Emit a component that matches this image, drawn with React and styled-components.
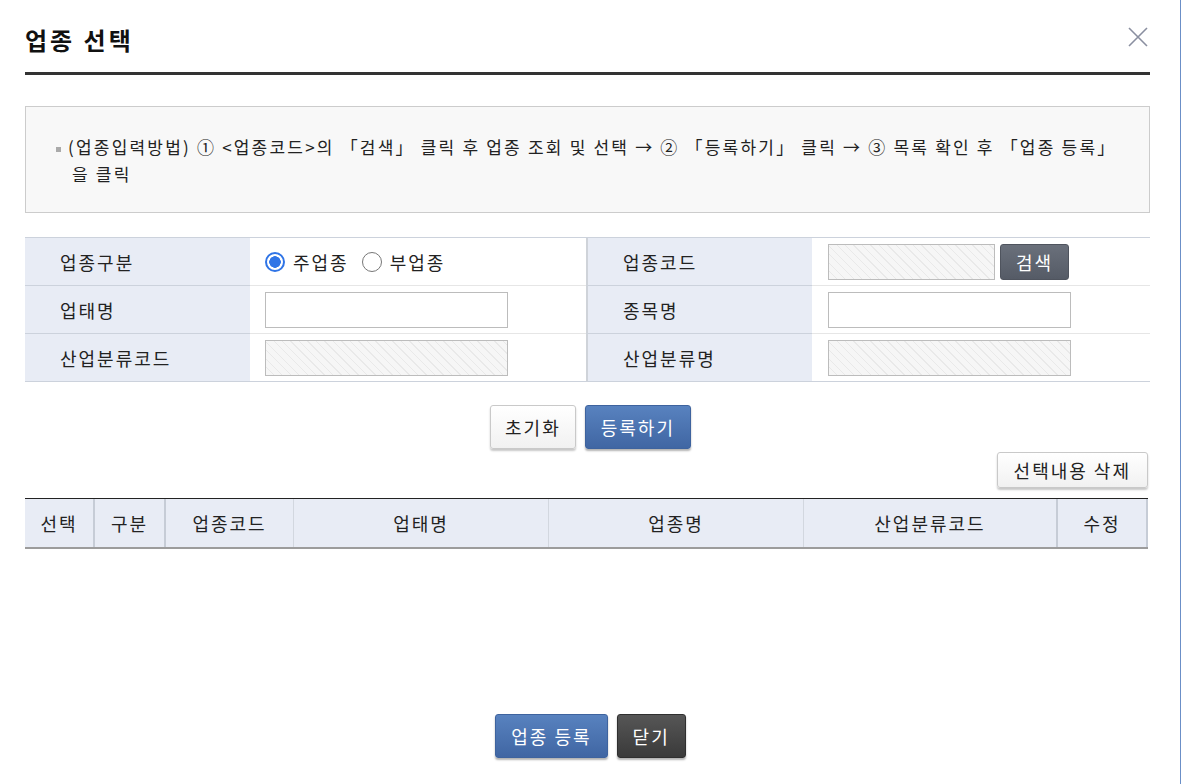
import React from 'react';
import styled, { createGlobalStyle, css } from 'styled-components';

const GlobalStyle = createGlobalStyle`
  html, body { margin: 0; padding: 0; background: #fff; }
  body { font-family: "Noto Sans CJK KR", "Noto Sans", sans-serif; color: #222; }
  * { box-sizing: border-box; }
`;

const Popup = styled.div`
  width: 1181px;
  height: 784px;
  padding: 0 30px 0 25px;
  border-right: 1px solid #6b8fc7;
  background: #fff;
  overflow: hidden;
`;

const Header = styled.div`
  display: flex;
  align-items: center;
  justify-content: space-between;
  height: 75px;
  padding: 8px 2px 0 0;
  border-bottom: 3px solid #333;
`;

const Title = styled.h1`
  margin: 0;
  font-size: 24px;
  font-weight: 700;
  line-height: 1;
  letter-spacing: 3px;
  color: #111;
`;

const CloseButton = styled.button`
  width: 20px;
  height: 20px;
  padding: 0;
  margin-top: -6px;
  border: 0;
  background: none;
  cursor: pointer;
`;

const InfoBox = styled.div`
  margin-top: 31px;
  padding: 26px 30px 25px 46px;
  border: 1px solid #ccc;
  background: #f8f8f8;
  font-size: 17px;
  line-height: 27px;
  letter-spacing: 2.2px;
  color: #222;
  text-indent: -16px;
`;

const Bullet = styled.span`
  display: inline-block;
  width: 5px;
  height: 5px;
  margin-right: 7px;
  background: #aaa;
  vertical-align: middle;
  text-indent: 0;
`;

const FormGrid = styled.div`
  display: grid;
  grid-template-columns: 225px 336px 226px 1fr;
  margin-top: 24px;
  border-top: 1px solid #ccd2dc;
`;

const LabelCell = styled.div`
  display: flex;
  align-items: center;
  height: 48px;
  padding-left: 35px;
  background: #e8ecf5;
  border-bottom: 1px solid #ccd2dc;
  font-size: 18px;
  letter-spacing: 2px;
  color: #222;
  ${(p) => p.$divider && css`
    border-left: 2px solid #cfd3d9;
  `}
`;

const ValueCell = styled.div`
  display: flex;
  align-items: center;
  gap: 5px;
  height: 48px;
  padding-left: ${(p) => p.$pl || 15}px;
  border-bottom: 1px solid ${(p) => (p.$last ? '#ccd2dc' : '#e6e6e6')};
  font-size: 18px;
`;

const TextInput = styled.input`
  width: ${(p) => p.$w || 243}px;
  height: 36px;
  margin: 0;
  padding: 0 8px;
  border: 1px solid #bcbcbc;
  background: #fff;
  font: inherit;
  ${(p) => p.disabled && css`
    background: repeating-linear-gradient(45deg, #f6f6f6 0, #f6f6f6 5px, #e9e9e9 5px, #e9e9e9 6px);
  `}
`;

const RadioLabel = styled.label`
  display: inline-flex;
  align-items: center;
  gap: 8px;
  margin-right: 8px;
  font-size: 18px;
  letter-spacing: 2px;
  color: #222;
  cursor: pointer;
`;

const RadioMark = styled.span`
  display: inline-block;
  width: 20px;
  height: 20px;
  border-radius: 50%;
  border: ${(p) => (p.$on ? '2px solid #2f74e6' : '1.5px solid #777')};
  background: ${(p) => (p.$on ? 'radial-gradient(circle, #2f74e6 0 5.5px, #fff 6px)' : '#fff')};
`;

const ButtonRow = styled.div`
  display: flex;
  justify-content: center;
  gap: 9px;
  padding-left: 6px;
  margin-top: ${(p) => p.$top || 0}px;
`;

const RightRow = styled.div`
  display: flex;
  justify-content: flex-end;
  padding-right: 2px;
  margin-top: 3px;
`;

const variants = {
  light: css`
    background: linear-gradient(#fff, #f1f1f1);
    border: 1px solid #c9c9c9;
    color: #222;
    box-shadow: 0 2px 2px rgba(0, 0, 0, 0.22);
  `,
  primary: css`
    background: linear-gradient(#5882bf, #4066a3);
    border: 1px solid #3e639e;
    color: #fff;
    box-shadow: 0 2px 2px rgba(0, 0, 0, 0.3);
  `,
  dark: css`
    background: linear-gradient(#565656, #3a3a3a);
    border: 1px solid #2f2f2f;
    color: #fff;
    box-shadow: 0 2px 2px rgba(0, 0, 0, 0.3);
  `,
  gray: css`
    background: linear-gradient(#6a707b, #555b66);
    border: 1px solid #4f545e;
    color: #fff;
  `,
};

const Button = styled.button`
  height: ${(p) => p.$h || 44}px;
  padding: 0 ${(p) => p.$px || 15}px;
  border-radius: 3px;
  font-family: inherit;
  font-size: 18px;
  letter-spacing: 2px;
  line-height: 1;
  cursor: pointer;
  ${(p) => variants[p.$variant || 'light']}
`;

const ListTable = styled.div`
  display: grid;
  grid-template-columns: 70px 71px 128px 255px 255px 254px 90px;
  width: 1123px;
  margin-top: 10px;
  border-top: 1px solid #222;
  border-bottom: 2px solid #9c9c9c;
  background: #e8ecf5;
`;

const HeadCell = styled.div`
  display: flex;
  align-items: center;
  justify-content: center;
  height: 48px;
  font-size: 18px;
  letter-spacing: 2px;
  color: #222;
  border-right: ${(p) => (p.$thick ? '2px solid #c6ccd6' : '1px solid #d2d7df')};
`;

const ListBody = styled.div`
  height: 165px;
`;

const columns = [
  { name: '선택', thick: true },
  { name: '구분', thick: true },
  { name: '업종코드' },
  { name: '업태명' },
  { name: '업종명' },
  { name: '산업분류코드', thick: true },
  { name: '수정', thick: true },
];

export default function App() {
  const [kind, setKind] = React.useState('main');

  return (
    <>
      <GlobalStyle />
      <Popup>
        <Header>
          <Title>업종 선택</Title>
          <CloseButton aria-label="닫기">
            <svg width="20" height="20" viewBox="0 0 20 20">
              <path d="M1 1L19 19M19 1L1 19" stroke="#8a8fa0" strokeWidth="1.6" fill="none" />
            </svg>
          </CloseButton>
        </Header>

        <InfoBox>
          <Bullet />
          (업종입력방법) ① &lt;업종코드&gt;의 「검색」 클릭 후 업종 조회 및 선택 → ② 「등록하기」 클릭 → ③ 목록 확인 후 「업종 등록」 을 클릭
        </InfoBox>

        <FormGrid>
          <LabelCell>업종구분</LabelCell>
          <ValueCell>
            <RadioLabel onClick={() => setKind('main')}>
              <RadioMark $on={kind === 'main'} />
              주업종
            </RadioLabel>
            <RadioLabel onClick={() => setKind('sub')}>
              <RadioMark $on={kind === 'sub'} />
              부업종
            </RadioLabel>
          </ValueCell>
          <LabelCell $divider>업종코드</LabelCell>
          <ValueCell $pl={16}>
            <TextInput $w={167} disabled />
            <Button $variant="gray" $h={36} $px={15}>검색</Button>
          </ValueCell>

          <LabelCell>업태명</LabelCell>
          <ValueCell><TextInput /></ValueCell>
          <LabelCell $divider>종목명</LabelCell>
          <ValueCell $pl={16}><TextInput /></ValueCell>

          <LabelCell>산업분류코드</LabelCell>
          <ValueCell $last><TextInput disabled /></ValueCell>
          <LabelCell $divider>산업분류명</LabelCell>
          <ValueCell $last $pl={16}><TextInput disabled /></ValueCell>
        </FormGrid>

        <ButtonRow $top={23}>
          <Button $variant="light" $px={14}>초기화</Button>
          <Button $variant="primary" $px={15}>등록하기</Button>
        </ButtonRow>

        <RightRow>
          <Button $variant="light" $h={36} $px={16}>선택내용 삭제</Button>
        </RightRow>

        <ListTable>
          {columns.map((c) => (
            <HeadCell key={c.name} $thick={c.thick}>{c.name}</HeadCell>
          ))}
        </ListTable>
        <ListBody />

        <ButtonRow>
          <Button $variant="primary" $px={15}>업종 등록</Button>
          <Button $variant="dark" $px={15}>닫기</Button>
        </ButtonRow>
      </Popup>
    </>
  );
}
